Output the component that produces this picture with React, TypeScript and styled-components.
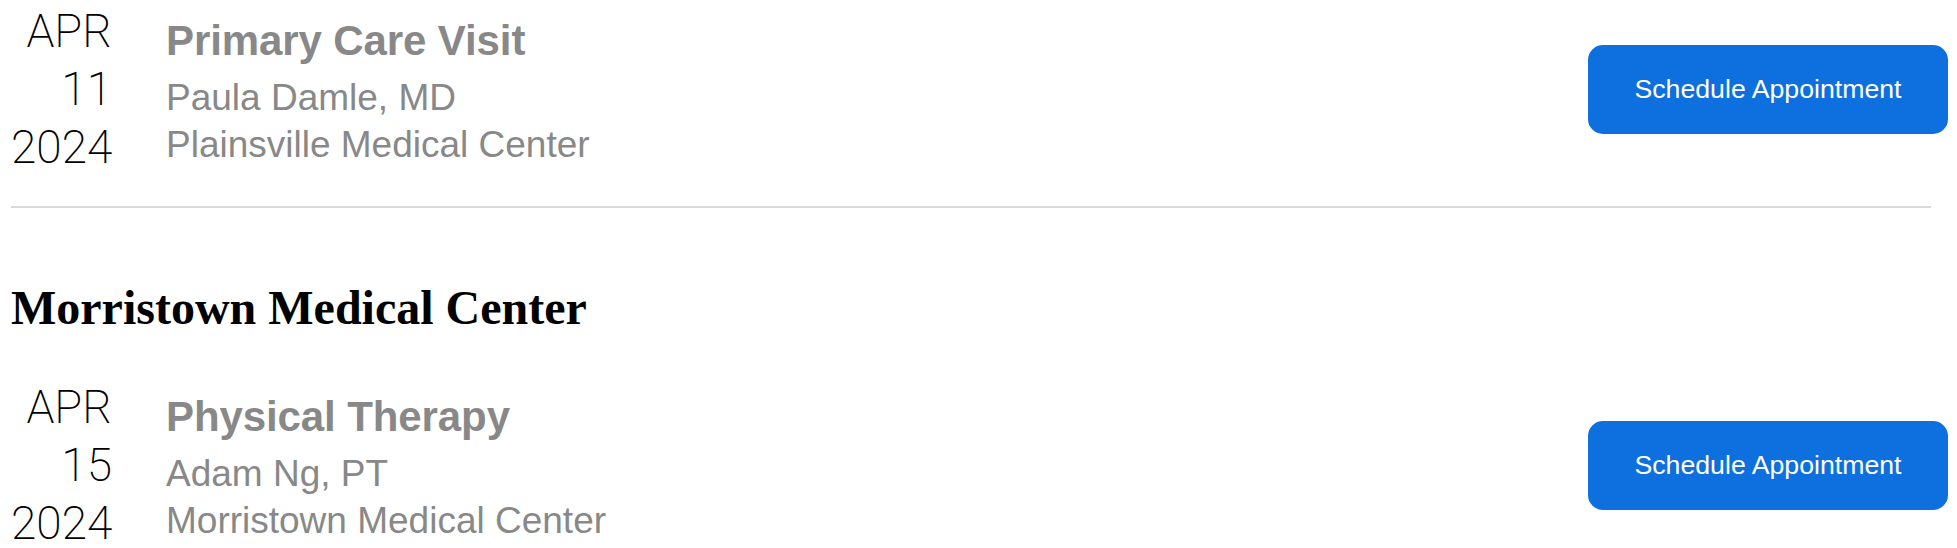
import React from "react";
import styled, { createGlobalStyle } from "styled-components";

const GlobalStyle = createGlobalStyle`
  html, body {
    margin: 0;
    padding: 0;
    background: #ffffff;
  }
  body {
    font-family: "Liberation Sans", Arial, sans-serif;
  }
`;

const Page = styled.main`
  display: flex;
  flex-direction: column;
  padding: 2px 9px 0 11px;
`;

const Row = styled.section`
  display: flex;
  align-items: flex-start;
  justify-content: space-between;
`;

const Left = styled.div`
  display: flex;
  align-items: flex-start;
  gap: 54px;
`;

const DateCol = styled.div`
  display: flex;
  flex-direction: column;
  width: 101px;
  text-align: right;
  font-family: Roboto, "Liberation Sans", sans-serif;
  font-weight: 200;
  font-size: 46px;
  line-height: 58px;
  color: #000;
`;

const Info = styled.div`
  display: flex;
  flex-direction: column;
  padding-top: 9px;
  color: #888888;
`;

const Title = styled.h3`
  margin: 0 0 3px 0;
  font-family: "Liberation Sans", Arial, sans-serif;
  font-weight: 700;
  font-size: 42px;
  line-height: 60px;
  letter-spacing: -0.1px;
`;

const Line = styled.p`
  margin: 0;
  font-family: "Liberation Sans", Arial, sans-serif;
  font-weight: 400;
  font-size: 37px;
  line-height: 47px;
`;

const Button = styled.button`
  align-self: center;
  width: 360px;
  height: 89px;
  border: none;
  border-radius: 15px;
  background: #0e6fde;
  color: #ffffff;
  font-family: "Liberation Sans", Arial, sans-serif;
  font-size: 26.7px;
  cursor: pointer;
`;

const Divider = styled.hr`
  border: none;
  height: 2px;
  background: #d9d9d9;
  margin: 30px 17px 72px 0;
`;

const GroupTitle = styled.h2`
  margin: 0 0 42px 0;
  font-family: "Liberation Serif", "Times New Roman", serif;
  font-weight: 700;
  font-size: 48px;
  line-height: 56px;
  color: #000;
`;

type Appt = {
  month: string;
  day: string;
  year: string;
  title: string;
  provider: string;
  location: string;
};

const Appointment: React.FC<{ a: Appt }> = ({ a }) => (
  <Row>
    <Left>
      <DateCol>
        <span>{a.month}</span>
        <span>{a.day}</span>
        <span>{a.year}</span>
      </DateCol>
      <Info>
        <Title>{a.title}</Title>
        <Line>{a.provider}</Line>
        <Line>{a.location}</Line>
      </Info>
    </Left>
    <Button>Schedule Appointment</Button>
  </Row>
);

const first: Appt = {
  month: "APR",
  day: "11",
  year: "2024",
  title: "Primary Care Visit",
  provider: "Paula Damle, MD",
  location: "Plainsville Medical Center",
};

const second: Appt = {
  month: "APR",
  day: "15",
  year: "2024",
  title: "Physical Therapy",
  provider: "Adam Ng, PT",
  location: "Morristown Medical Center",
};

export default function App() {
  return (
    <>
      <GlobalStyle />
      <Page>
        <Appointment a={first} />
        <Divider />
        <GroupTitle>Morristown Medical Center</GroupTitle>
        <Appointment a={second} />
      </Page>
    </>
  );
}
